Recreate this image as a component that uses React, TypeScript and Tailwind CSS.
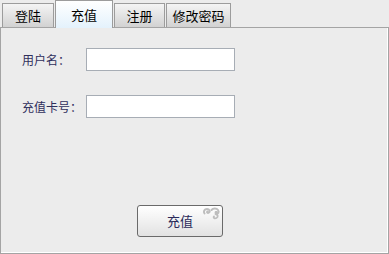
import { useState } from 'react';

const tabs = ['登陆', '充值', '注册', '修改密码'];
const tabWidths = ['w-[52px]', 'w-[58px]', 'w-[51px]', 'w-[65px]'];

const font = { fontFamily: '"Noto Sans CJK SC", "Noto Sans", sans-serif' };

const Swirl = () => (
    <svg className="absolute right-[1px] top-[1px]" width="19" height="13" viewBox="0 0 19 13" fill="none">
        <path d="M2.5 6.5c-1.5-2 0-4.5 2.5-4.5s3.5 2.5 2 3.5-2.5-0.5-1.5-1" stroke="#bdbdbd" strokeWidth="2" strokeLinecap="round" />
        <path d="M9.5 3c1.5-1.8 5-2 6.5 0s0 4-1.5 3.5-1-2 0-1.5" stroke="#bdbdbd" strokeWidth="2" strokeLinecap="round" />
        <path d="M13.5 7c2.5 0.5 3 3 1 4s-3.5-0.5-2.5-1.5" stroke="#bdbdbd" strokeWidth="1.8" strokeLinecap="round" />
    </svg>
);

const App = () => {
    const [active, setActive] = useState(1);

    return (
        <div className="w-[389px] h-[254px] bg-[#ececec] flex flex-col" style={font}>
            {/* Tabs */}
            <div className="flex items-end h-[27px] pl-[2px] gap-px">
                {tabs.map((t, i) => (
                    <button
                        key={t}
                        onClick={() => setActive(i)}
                        className={
                            i === active
                                ? `${tabWidths[i]} h-[28px] -mb-px relative z-10 border border-b-0 border-[#9c9c9c] bg-gradient-to-b from-white to-[#e4f2fc] text-[13px] text-black flex items-center justify-center`
                                : `${tabWidths[i]} h-[24px] border border-b-0 border-[#9c9c9c] bg-gradient-to-b from-[#f4f4f4] to-[#d2d2d2] text-[13px] text-black flex items-center justify-center`
                        }
                    >
                        {t}
                    </button>
                ))}
            </div>

            {/* Panel */}
            <div className="flex-1 border border-[#a4a4a4] shadow-[inset_-1px_-1px_0_#ffffff] flex flex-col pt-[20px] pl-[21px]">
                <div className="flex items-center">
                    <span className="w-[64px] text-[12px] text-[#2f2f5c]">用户名：</span>
                    <input className="w-[149px] h-[23px] bg-white border border-[#a7adb5] outline-none px-1 text-[12px]" />
                </div>
                <div className="flex items-center mt-[24px]">
                    <span className="w-[64px] text-[12px] text-[#2f2f5c]">充值卡号：</span>
                    <input className="w-[149px] h-[23px] bg-white border border-[#a7adb5] outline-none px-1 text-[12px]" />
                </div>
                <button className="relative mt-[87px] ml-[115px] w-[86px] h-[32px] rounded-[3px] border border-[#6a6a6a] bg-gradient-to-b from-white to-[#e2e2e2] text-[13px] text-[#2a2a5a] flex items-center justify-center">
                    <Swirl />
                    充值
                </button>
            </div>
        </div>
    );
};

export default App;
